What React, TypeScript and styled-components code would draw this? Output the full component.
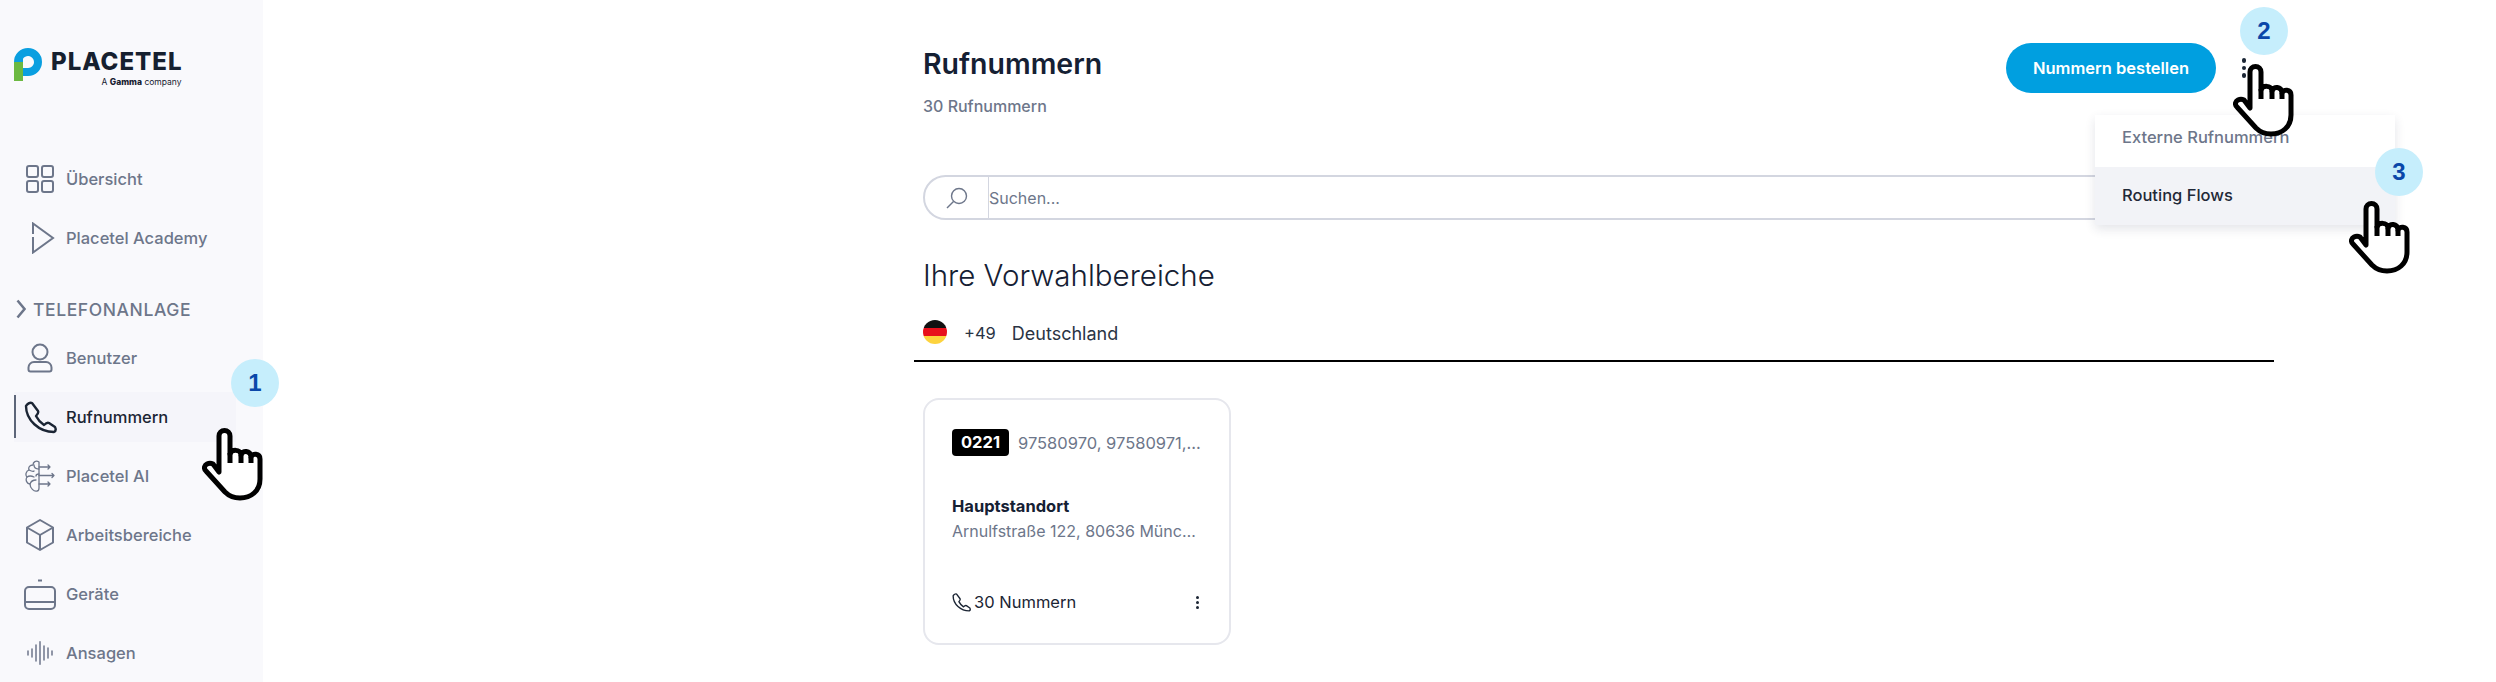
import styled, { createGlobalStyle } from "styled-components";

const GlobalStyle = createGlobalStyle`
  html, body {
    margin: 0;
    padding: 0;
    background: #ffffff;
    font-family: "Inter", "Liberation Sans", sans-serif;
    overflow: hidden;
  }
  * {
    box-sizing: border-box;
  }
`;

const Page = styled.div`
  position: relative;
  width: 2496px;
  height: 682px;
  display: flex;
  overflow: hidden;
`;

const Sidebar = styled.aside`
  width: 263px;
  height: 100%;
  flex-shrink: 0;
  padding: 48px 27px 0 14px;
  background: #f9f9fc;
`;

const Brand = styled.div`
  display: flex;
  gap: 9px;
  height: 38px;
  margin-bottom: 68px;
`;

const BrandText = styled.div`
  display: flex;
  flex-direction: column;
  align-items: flex-end;
  padding-top: 1px;
`;

const BrandName = styled.span`
  font-size: 24px;
  line-height: 26px;
  font-weight: 800;
  letter-spacing: 1px;
  margin-right: -1px;
  color: #16202f;
`;

const BrandSub = styled.span`
  font-size: 8.5px;
  line-height: 12px;
  margin-top: 1px;
  color: #16202f;
  b {
    font-weight: 800;
  }
`;

const NavRow = styled.div<{ $active?: boolean }>`
  position: relative;
  display: flex;
  align-items: center;
  height: 50px;
  margin-bottom: 9px;
  font-size: 16.5px;
  font-weight: 500;
  color: ${({ $active }) => ($active ? "#1b2534" : "#6d768a")};
  background: ${({ $active }) => ($active ? "#f5f5fa" : "transparent")};
  &::before {
    content: "";
    display: ${({ $active }) => ($active ? "block" : "none")};
    position: absolute;
    left: 0;
    top: 3px;
    bottom: 4px;
    width: 2px;
    background: #5d6679;
  }
`;

const NavIcon = styled.span`
  width: 52px;
  flex-shrink: 0;
  display: flex;
  justify-content: center;
  align-items: center;
`;

const SectionTitle = styled.div`
  display: flex;
  align-items: center;
  gap: 7px;
  height: 24px;
  margin: 34px 0 12px 2px;
  font-size: 17.5px;
  font-weight: 500;
  letter-spacing: 0.6px;
  color: #6d768a;
`;

const Main = styled.main`
  width: 1360px;
  margin-left: 651px;
  padding-top: 46px;
`;

const Header = styled.header`
  display: flex;
  justify-content: space-between;
  align-items: flex-start;
  padding: 0 18px 0 9px;
`;

const Title = styled.h1`
  margin: 0;
  font-size: 28.5px;
  line-height: 36px;
  font-weight: 600;
  color: #152033;
`;

const Subtitle = styled.div`
  margin-top: 12px;
  font-size: 16px;
  line-height: 24px;
  font-weight: 500;
  color: #6d768a;
`;

const Actions = styled.div`
  position: relative;
  display: flex;
  align-items: center;
  gap: 16px;
  margin-top: -3px;
`;

const OrderButton = styled.button`
  width: 210px;
  height: 50px;
  border: 0;
  border-radius: 25px;
  background: #009fe0;
  color: #ffffff;
  font-family: inherit;
  font-size: 16.5px;
  font-weight: 600;
`;

const Dots = styled.div<{ $size: number }>`
  display: flex;
  flex-direction: column;
  align-items: center;
  justify-content: center;
  gap: ${({ $size }) => $size}px;
  width: 24px;
  i {
    display: block;
    width: ${({ $size }) => $size * 1.5}px;
    height: ${({ $size }) => $size * 1.5}px;
    border-radius: 50%;
    background: #1b2534;
  }
`;

const Dropdown = styled.div`
  position: absolute;
  top: 72px;
  right: -139px;
  width: 300px;
  background: #ffffff;
  box-shadow: 0 4px 10px rgba(30, 40, 70, 0.12);
  z-index: 2;
`;

const DropdownItem = styled.div<{ $active?: boolean }>`
  display: flex;
  align-items: center;
  height: ${({ $active }) => ($active ? 58 : 52)}px;
  padding: ${({ $active }) => ($active ? "0 0 2px" : "0 0 8px")};
  padding-left: 27px;
  font-size: 16.5px;
  font-weight: 500;
  color: ${({ $active }) => ($active ? "#1f2937" : "#6d768a")};
  background: ${({ $active }) => ($active ? "#f2f3f7" : "#ffffff")};
`;

const SearchBox = styled.div`
  display: flex;
  align-items: stretch;
  height: 45px;
  margin: 57px 0 0 9px;
  border: 2px solid #d3d6e0;
  border-radius: 23px;
  font-size: 16px;
  color: #6d768a;
`;

const SearchIcon = styled.span`
  width: 64px;
  flex-shrink: 0;
  display: flex;
  align-items: center;
  justify-content: center;
  border-right: 1px solid #d3d6e0;
`;

const SearchLabel = styled.span`
  display: flex;
  align-items: center;
`;

const Heading = styled.h2`
  margin: 33px 0 0 9px;
  font-size: 29.5px;
  line-height: 44px;
  font-weight: 300;
  color: #152033;
`;

const CountryRow = styled.div`
  display: flex;
  align-items: center;
  height: 53px;
  padding: 12px 0 15px 9px;
  border-bottom: 2px solid #000000;
  margin-top: 12px;
  font-size: 18px;
  font-weight: 400;
  color: #2a3444;
`;

const Flag = styled.span`
  width: 24px;
  height: 24px;
  margin: -3px 17px 0 0;
  border-radius: 50%;
  background: linear-gradient(#111111 0 33.3%, #e8101c 33.3% 66.6%, #fdd33e 66.6%);
`;

const Dial = styled.span`
  margin-right: 16px;
  font-size: 16.5px;
`;

const AreaCard = styled.article`
  width: 308px;
  height: 247px;
  margin: 36px 0 0 9px;
  padding: 29px 27px 0;
  border: 2px solid #e6e7ed;
  border-radius: 16px;
  display: flex;
  flex-direction: column;
`;

const CardTop = styled.div`
  display: flex;
  align-items: center;
  gap: 9px;
  height: 27px;
`;

const AreaBadge = styled.span`
  flex-shrink: 0;
  width: 57px;
  height: 27px;
  border-radius: 4px;
  background: #000000;
  color: #ffffff;
  font-size: 16.5px;
  font-weight: 700;
  line-height: 27px;
  text-align: center;
`;

const Muted = styled.span<{ $size: number }>`
  min-width: 0;
  font-size: ${({ $size }) => $size}px;
  line-height: 24px;
  color: #6d768a;
  white-space: nowrap;
  overflow: hidden;
  text-overflow: ellipsis;
`;

const LocationName = styled.div`
  margin-top: 38px;
  margin-bottom: 1px;
  font-size: 16.5px;
  line-height: 24px;
  font-weight: 700;
  color: #152033;
`;

const CardFooter = styled.div`
  display: flex;
  align-items: center;
  justify-content: space-between;
  margin: 49px -7px 0 0;
  font-size: 16.5px;
  color: #1b2534;
`;

const FooterCount = styled.span`
  display: flex;
  align-items: center;
  gap: 3px;
`;

const Bubble = styled.div<{ $x: number; $y: number }>`
  position: absolute;
  left: ${({ $x }) => $x - 24}px;
  top: ${({ $y }) => $y - 24}px;
  width: 48px;
  height: 48px;
  border-radius: 50%;
  background: #c6eefc;
  color: #0a47a9;
  font-family: "Liberation Sans", sans-serif;
  font-size: 24px;
  font-weight: 700;
  line-height: 48px;
  text-align: center;
  z-index: 4;
`;

const HandWrap = styled.svg<{ $x: number; $y: number }>`
  position: absolute;
  left: ${({ $x }) => $x}px;
  top: ${({ $y }) => $y}px;
  z-index: 5;
`;

const Hand = ({ x, y }: { x: number; y: number }) => (
  <HandWrap $x={x} $y={y} width="62" height="74" viewBox="0 0 62 74" fill="none">
    <path
      d="M17 45V9a5.500 5.500 0 0 1 11 0v18c1-5 11-5 11 1c1-5 10-5 10 2c1-4 9-4 9 2v20c0 12-9 19-20 19c-6 0-11-2-15-6L4 44c-3-3-1-6 1-7c2-1 4-1 6 0z"
      fill="#ffffff"
      stroke="#000000"
      strokeWidth="5"
      strokeLinejoin="round"
    />
    <path d="M28 26v10M39 28v8M49 30v6" stroke="#000000" strokeWidth="5" />
  </HandWrap>
);

const gray = "#6d768a";

const GridIcon = () => (
  <svg width="28" height="28" viewBox="0 0 28 28" fill="none" stroke={gray} strokeWidth="2">
    <rect x="1" y="1" width="11" height="11" rx="2" />
    <rect x="16" y="1" width="11" height="11" rx="2" />
    <rect x="1" y="16" width="11" height="11" rx="2" />
    <rect x="16" y="16" width="11" height="11" rx="2" />
  </svg>
);

const PlayIcon = () => (
  <svg width="52" height="32" viewBox="0 0 52 32" fill="none" stroke={gray} strokeWidth="2">
    <path d="M19 12V1.500L39 16 19 30.500V15" />
  </svg>
);

const UserIcon = () => (
  <svg width="26" height="30" viewBox="0 0 26 30" fill="none" stroke={gray} strokeWidth="2">
    <circle cx="13" cy="9" r="7.500" />
    <path d="M7 19h12a5.500 5.500 0 0 1 5.500 5.500v2a2 2 0 0 1-2 2h-19a2 2 0 0 1-2-2v-2A5.500 5.500 0 0 1 7 19z" />
  </svg>
);

const PhoneIcon = ({ size, color, weight }: { size: number; color: string; weight: number }) => (
  <svg width={size} height={size} viewBox="0 0 33 33" fill="none" stroke={color} strokeWidth={weight} strokeLinejoin="round">
    <path d="M2 5c1-2 4-4 6-3l6 8c1 2-1 4-2 5c2 4 5 7 8 9c2-2 3-3 5-2l6 4c1 2 1 4-1 5C15 31 2 19 2 5z" />
  </svg>
);

const BrainIcon = () => (
  <svg width="30" height="32" viewBox="0 0 30 32" fill="none" stroke={gray} strokeWidth="1.300" strokeLinecap="round" strokeLinejoin="round">
    <path d="M14 2C11 0 8 2 8 5C5 5 3 7 4 10C1 11 0 15 2 17C0 20 2 24 5 24C5 28 9 32 12 31C14 31 14 29 14 28V2z" />
    <path d="M4 10c2 1 4 2 5 1M2 17c3-2 5-1 7 0M5 24c1-3 3-4 6-4M9 5c0 3 2 4 5 4M14 14c-2 0-3 1-3 2" />
    <path d="M14 7h11M14 15.500h15M14 24h11M23 5l2 2-2 2M27 13.500l2 2-2 2M23 22l2 2-2 2" />
  </svg>
);

const CubeIcon = () => (
  <svg width="28" height="32" viewBox="0 0 28 32" fill="none" stroke={gray} strokeWidth="2" strokeLinejoin="round">
    <path d="M14 1L27 8.500V23.500L14 31 1 23.500V8.500zM1 8.500L14 16l13-7.500M14 16v15" />
  </svg>
);

const DeviceIcon = () => (
  <svg width="32" height="31" viewBox="0 0 32 31" fill="none" stroke={gray} strokeWidth="2">
    <path d="M14 1.500h4M1 23h30" />
    <rect x="1" y="8" width="30" height="22" rx="4" />
  </svg>
);

const WaveIcon = () => (
  <svg width="26" height="24" viewBox="0 0 26 24" fill="none" stroke={gray} strokeWidth="1.500" strokeLinecap="round">
    <path d="M1 10v4M5 8v8M9 4v16M13 .8v22.400M17 5v14M21 7v10M25 10v4" />
  </svg>
);

const Chevron = () => (
  <svg width="10" height="20" viewBox="0 0 10 20" fill="none" stroke={gray} strokeWidth="2.500">
    <path d="M1.500 1.500L8.500 10l-7 8.500" />
  </svg>
);

const SearchGlass = () => (
  <svg width="22" height="22" viewBox="0 0 22 22" fill="none" stroke={gray} strokeWidth="1.400">
    <circle cx="13" cy="9" r="7.500" />
    <path d="M7.500 14.500L1 21" />
  </svg>
);

const Logo = () => (
  <svg width="28" height="33" viewBox="0 0 28 33">
    <path d="M14 0a14 14 0 1 1 0 28h-5v-8h5a6 6 0 1 0-5-9.300V14H0A14 14 0 0 1 14 0z" fill="#0a9fe0" />
    <rect x="0" y="14" width="9" height="19" fill="#6cb941" />
  </svg>
);

const App = () => {
  return (
    <Page>
      <GlobalStyle />
      <Sidebar>
        <Brand>
          <Logo />
          <BrandText>
            <BrandName>PLACETEL</BrandName>
            <BrandSub>
              A <b>Gamma</b> company
            </BrandSub>
          </BrandText>
        </Brand>
        <NavRow>
          <NavIcon><GridIcon /></NavIcon>Übersicht
        </NavRow>
        <NavRow>
          <NavIcon><PlayIcon /></NavIcon>Placetel Academy
        </NavRow>
        <SectionTitle>
          <Chevron />
          TELEFONANLAGE
        </SectionTitle>
        <NavRow>
          <NavIcon><UserIcon /></NavIcon>Benutzer
        </NavRow>
        <NavRow $active>
          <NavIcon><PhoneIcon size={33} color="#1b2534" weight={2.4} /></NavIcon>Rufnummern
        </NavRow>
        <NavRow>
          <NavIcon><BrainIcon /></NavIcon>Placetel AI
        </NavRow>
        <NavRow>
          <NavIcon><CubeIcon /></NavIcon>Arbeitsbereiche
        </NavRow>
        <NavRow>
          <NavIcon><DeviceIcon /></NavIcon>Geräte
        </NavRow>
        <NavRow>
          <NavIcon><WaveIcon /></NavIcon>Ansagen
        </NavRow>
      </Sidebar>

      <Main>
        <Header>
          <div>
            <Title>Rufnummern</Title>
            <Subtitle>30 Rufnummern</Subtitle>
          </div>
          <Actions>
            <OrderButton>Nummern bestellen</OrderButton>
            <Dots $size={3}><i /><i /><i /></Dots>
            <Dropdown>
              <DropdownItem>Externe Rufnummern</DropdownItem>
              <DropdownItem $active>Routing Flows</DropdownItem>
            </Dropdown>
          </Actions>
        </Header>

        <SearchBox>
          <SearchIcon><SearchGlass /></SearchIcon>
          <SearchLabel>Suchen...</SearchLabel>
        </SearchBox>

        <Heading>Ihre Vorwahlbereiche</Heading>
        <CountryRow>
          <Flag />
          <Dial>+49</Dial>
          Deutschland
        </CountryRow>

        <AreaCard>
          <CardTop>
            <AreaBadge>0221</AreaBadge>
            <Muted $size={16.5}>97580970, 97580971, 97580972</Muted>
          </CardTop>
          <LocationName>Hauptstandort</LocationName>
          <Muted $size={16}>Arnulfstraße 122, 80636 München</Muted>
          <CardFooter>
            <FooterCount>
              <PhoneIcon size={19} color="#1b2534" weight={2.4} />
              30 Nummern
            </FooterCount>
            <Dots $size={2}><i /><i /><i /></Dots>
          </CardFooter>
        </AreaCard>
      </Main>

      <Bubble $x={255} $y={383}>1</Bubble>
      <Bubble $x={2264} $y={31}>2</Bubble>
      <Bubble $x={2399} $y={172}>3</Bubble>
      <Hand x={202} y={427} />
      <Hand x={2233} y={63} />
      <Hand x={2349} y={200} />
    </Page>
  );
};

export default App;
